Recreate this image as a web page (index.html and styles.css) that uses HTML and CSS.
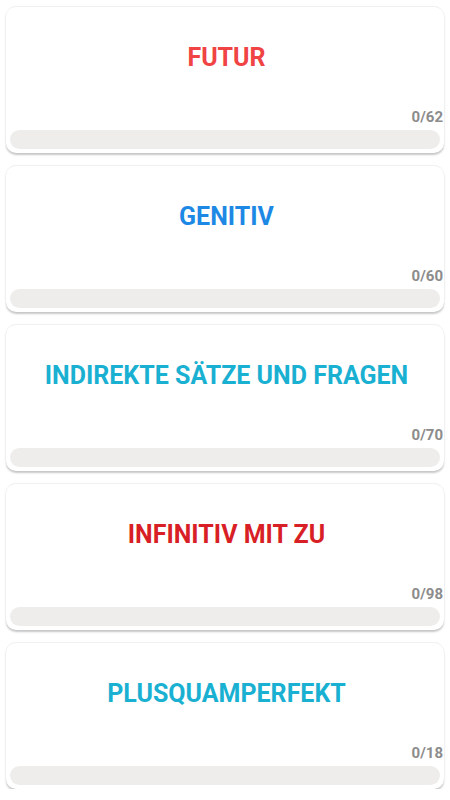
FILE: index.html
```html
<!DOCTYPE html>
<html>
<head>
	<title>Grammatik</title>
	<meta charset="utf-8">
	<link rel="stylesheet" href="styles.css">
</head>
<body>
	<div class="list">
		<div class="topic">
			<div class="topic-title red">FUTUR</div>
			<div class="topic-count">0/62</div>
			<div class="bar"><div class="bar-fill" style="width: 0%"></div></div>
		</div>
		<div class="topic">
			<div class="topic-title blue">GENITIV</div>
			<div class="topic-count">0/60</div>
			<div class="bar"><div class="bar-fill" style="width: 0%"></div></div>
		</div>
		<div class="topic">
			<div class="topic-title cyan">INDIREKTE SÄTZE UND FRAGEN</div>
			<div class="topic-count">0/70</div>
			<div class="bar"><div class="bar-fill" style="width: 0%"></div></div>
		</div>
		<div class="topic">
			<div class="topic-title dark-red">INFINITIV MIT ZU</div>
			<div class="topic-count">0/98</div>
			<div class="bar"><div class="bar-fill" style="width: 0%"></div></div>
		</div>
		<div class="topic">
			<div class="topic-title cyan">PLUSQUAMPERFEKT</div>
			<div class="topic-count">0/18</div>
			<div class="bar"><div class="bar-fill" style="width: 0%"></div></div>
		</div>
	</div>
</body>
</html>
```

FILE: styles.css
```css
body {
	margin: 0;
	padding: 6px 6px 0 6px;
	background: #fff;
	font-family: Roboto, "Liberation Sans", sans-serif;
}
.list {
	display: flex;
	flex-direction: column;
	gap: 12px;
}
.topic {
	height: 147px;
	box-sizing: border-box;
	padding: 0 1px 4px 4px;
	border-radius: 10px;
	border-top: 1px solid #f1f1f1;
	background: #fff;
	box-shadow: 0 2px 2px rgba(0, 0, 0, 0.22), 0 0 1px rgba(0, 0, 0, 0.06);
	display: flex;
	flex-direction: column;
}
.topic-title {
	height: 100px;
	display: flex;
	align-items: center;
	justify-content: center;
	font-size: 25px;
	font-weight: bold;
}
.red { color: #f04343; }
.blue { color: #1e88e5; }
.cyan { color: #19b0d2; }
.dark-red { color: #d81f26; }
.topic-count {
	margin-top: 2px;
	text-align: right;
	font-size: 15px;
	font-weight: bold;
	color: #8c8c8c;
	line-height: 16px;
}
.bar {
	margin: 5px 3px 0 0;
	height: 19px;
	border-radius: 10px;
	background: #eeedeb;
	overflow: hidden;
}
.bar-fill {
	height: 100%;
	background: #19b0d2;
}
```
